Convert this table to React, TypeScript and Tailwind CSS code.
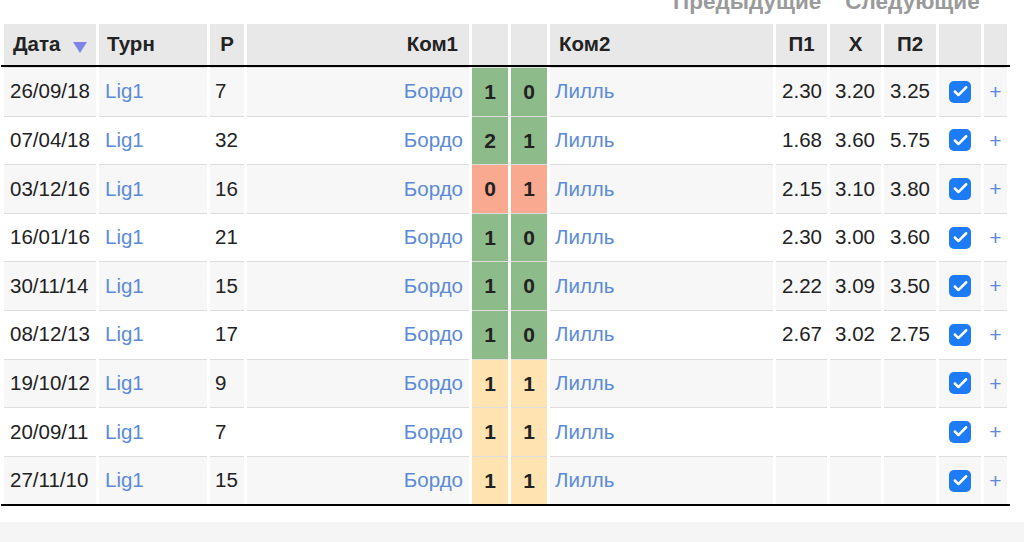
import { Check } from 'lucide-react'

type Match = {
  date: string
  round: string
  g1: number
  g2: number
  odds?: [string, string, string]
}

const matches: Match[] = [
  { date: '26/09/18', round: '7', g1: 1, g2: 0, odds: ['2.30', '3.20', '3.25'] },
  { date: '07/04/18', round: '32', g1: 2, g2: 1, odds: ['1.68', '3.60', '5.75'] },
  { date: '03/12/16', round: '16', g1: 0, g2: 1, odds: ['2.15', '3.10', '3.80'] },
  { date: '16/01/16', round: '21', g1: 1, g2: 0, odds: ['2.30', '3.00', '3.60'] },
  { date: '30/11/14', round: '15', g1: 1, g2: 0, odds: ['2.22', '3.09', '3.50'] },
  { date: '08/12/13', round: '17', g1: 1, g2: 0, odds: ['2.67', '3.02', '2.75'] },
  { date: '19/10/12', round: '9', g1: 1, g2: 1 },
  { date: '20/09/11', round: '7', g1: 1, g2: 1 },
  { date: '27/11/10', round: '15', g1: 1, g2: 1 },
]

const cols = 'grid grid-cols-[92px_108px_34px_222px_36px_36px_223px_51px_51px_52px_42px_23px] gap-x-[3px] px-[3px]'

function scoreBg(m: Match) {
  if (m.g1 > m.g2) return 'bg-[#8dbb89]'
  if (m.g1 < m.g2) return 'bg-[#f9a990]'
  return 'bg-[#ffe4b2]'
}

function SortArrow() {
  return (
    <svg width="14" height="11" viewBox="0 0 14 11" className="ml-[13px] mt-[6px]">
      <path d="M0 0 H14 L7 11 Z" fill="#8082e6" />
    </svg>
  )
}

function CheckBox() {
  return (
    <div className="flex h-[22px] w-[22px] items-center justify-center rounded-[5px] bg-[#1d7cf5]">
      <Check size={17} strokeWidth={3.5} color="white" />
    </div>
  )
}

export default function App() {
  const th = 'flex h-[41px] items-center bg-[#e8e8e8] font-bold text-[#222]'
  const link = 'text-[#5b8bd8]'
  const ink = 'text-[#222]'
  return (
    <div className="min-h-[542px] bg-white font-['Liberation_Sans',Arial,sans-serif] text-[20.5px]">
      {/* nav links, scrolled partly out of view */}
      <div className="flex h-[24px] flex-col">
        <div className="mt-[-9px] flex gap-[24px] pl-[673px] text-[22.5px] font-bold leading-[22px] text-[#9a9a9a]">
          <span>Предыдущие</span>
          <span>Следующие</span>
        </div>
      </div>

      <div className="ml-[1px] w-[1009px]">
        <div className={cols}>
          <div className={`${th} pl-[9px]`}>Дата<SortArrow /></div>
          <div className={`${th} pl-[8px]`}>Турн</div>
          <div className={`${th} justify-center`}>Р</div>
          <div className={`${th} justify-end pr-[11px]`}>Ком1</div>
          <div className={th} />
          <div className={th} />
          <div className={`${th} pl-[9px]`}>Ком2</div>
          <div className={`${th} justify-center`}>П1</div>
          <div className={`${th} justify-center`}>X</div>
          <div className={`${th} justify-center`}>П2</div>
          <div className={th} />
          <div className={th} />
        </div>
        <div className="h-[2px] bg-black" />

        {matches.map((m, i) => {
          const bg = i % 2 === 0 ? 'bg-[#f7f7f7]' : 'bg-white'
          const td = `flex h-[48.6px] items-center border-t border-[#dddddd] ${bg}`
          const sc = `flex h-[48.6px] items-center justify-center border-t border-[#dddddd] text-[21px] font-bold text-[#222] ${scoreBg(m)}`
          return (
            <div key={m.date} className={cols}>
              <div className={`${td} ${ink} pl-[6px]`}>{m.date}</div>
              <div className={`${td} ${link} pl-[6px]`}>Lig1</div>
              <div className={`${td} ${ink} pl-[5px]`}>{m.round}</div>
              <div className={`${td} ${link} justify-end pr-[6px]`}>Бордо</div>
              <div className={sc}>{m.g1}</div>
              <div className={sc}>{m.g2}</div>
              <div className={`${td} ${link} pl-[5px]`}>Лилль</div>
              <div className={`${td} ${ink} justify-end pr-[5px]`}>{m.odds?.[0]}</div>
              <div className={`${td} ${ink} justify-end pr-[6px]`}>{m.odds?.[1]}</div>
              <div className={`${td} ${ink} justify-end pr-[6px]`}>{m.odds?.[2]}</div>
              <div className={`${td} justify-center`}><CheckBox /></div>
              <div className={`${td} ${link} justify-center text-[21px]`}>+</div>
            </div>
          )
        })}
        <div className="h-[2px] bg-black" />
      </div>

      <div className="mt-[16px] h-[40px] bg-[#f5f5f5]" />
    </div>
  )
}
